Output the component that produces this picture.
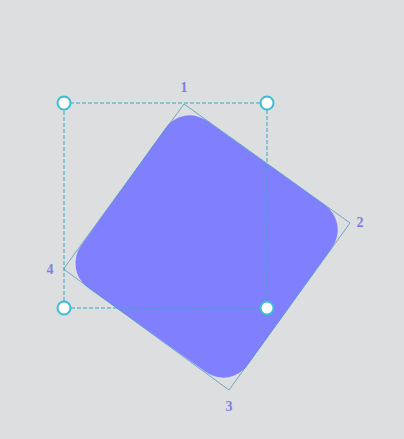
import React from 'react';

const CX = 206.6;
const CY = 246.5;
const SIDE = 205;
const ANGLE = 35.6;

const corners = [
  { n: '1', x: 184, y: 104, lx: 184, ly: 88 },
  { n: '2', x: 350, y: 223, lx: 360, ly: 223 },
  { n: '3', x: 229, y: 390, lx: 229, ly: 407 },
  { n: '4', x: 63.5, y: 269, lx: 50, ly: 270 },
];

const handles = [
  [64, 103],
  [267, 103],
  [64, 308],
  [267, 308],
];

export default function App() {
  return (
    <div className="relative w-[404px] h-[439px] bg-[#dcdee0] overflow-hidden">
      <svg width="404" height="439" className="absolute inset-0">
        <rect
          x={CX - SIDE / 2}
          y={CY - SIDE / 2}
          width={SIDE}
          height={SIDE}
          rx="30"
          fill="#8080ff"
          transform={`rotate(${ANGLE} ${CX} ${CY})`}
        />
        <polygon
          points={corners.map(c => `${c.x},${c.y}`).join(' ')}
          fill="none"
          stroke="#4f98c4"
          strokeWidth="0.8"
        />
        <rect
          x="64"
          y="103"
          width="203"
          height="205"
          fill="none"
          stroke="#36a9c0"
          strokeWidth="1"
          strokeDasharray="4 2"
        />
        {handles.map(([x, y]) => (
          <circle key={`${x}-${y}`} cx={x} cy={y} r="6.5" fill="#fff" stroke="#3cbcd2" strokeWidth="2" />
        ))}
      </svg>
      {corners.map(c => (
        <span
          key={c.n}
          className="absolute -translate-x-1/2 -translate-y-1/2 text-[14px] font-bold leading-none text-[#7e7ee6] font-['Liberation_Serif',serif]"
          style={{ left: c.lx, top: c.ly }}
        >
          {c.n}
        </span>
      ))}
    </div>
  );
}
